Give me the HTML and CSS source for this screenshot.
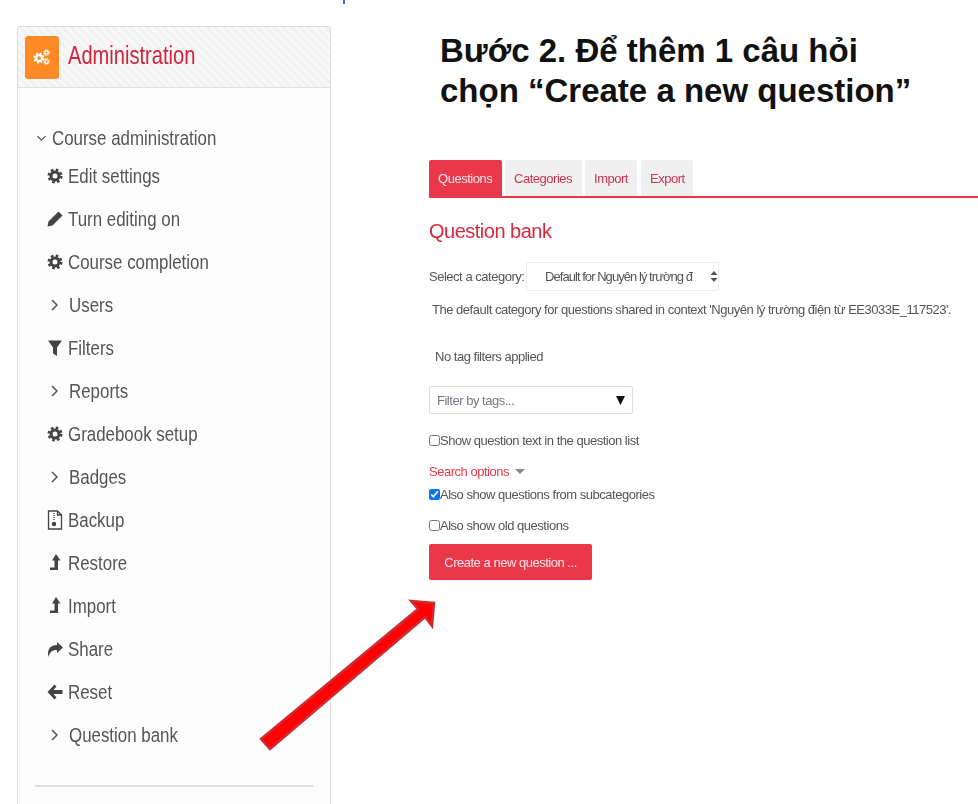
FILE: index.html
```html
<!DOCTYPE html>
<html lang="vi">
<head>
  <meta charset="UTF-8" />
  <meta name="viewport" content="width=device-width, initial-scale=1.0" />
  <title>Question bank</title>
  <link rel="stylesheet" href="styles.css">
</head>
<body>
  <svg class="defs" width="0" height="0">
    <symbol id="gear" viewBox="0 0 16 16">
      <circle cx="8" cy="8" r="6.3" fill="none" stroke="currentColor" stroke-width="2.4" stroke-dasharray="2.6 2.35" />
      <circle cx="8" cy="8" r="4" fill="none" stroke="currentColor" stroke-width="3" />
    </symbol>
    <symbol id="chevron" viewBox="0 0 16 16">
      <path d="M5 3l5 5-5 5" fill="none" stroke="currentColor" stroke-width="1.5" />
    </symbol>
    <symbol id="upload" viewBox="0 0 16 18">
      <path d="M9 0l4.500 6.500H11V16H3v-2.500h4.500v-7H5z" fill="currentColor" />
    </symbol>
  </svg>

  <div class="tick"></div>

  <div class="page">
    <aside class="sidebar">
      <div class="sidebar-head">
        <span class="head-icon">
          <svg width="18" height="18" viewBox="0 0 18 18">
            <use href="#gear" x="0" y="4" width="12" height="12" />
            <use href="#gear" x="10" y="1" width="7" height="7" />
            <use href="#gear" x="10" y="10" width="7" height="7" />
          </svg>
        </span>
        <h2>Administration</h2>
      </div>
      <div class="sidebar-body">
        <div class="course-title">
          <svg class="chev-down" width="13" height="13"><use href="#chevron" /></svg>
          <span class="lbl">Course administration</span>
        </div>
        <ul class="menu">
          <li><svg class="ico" width="16" height="16"><use href="#gear" /></svg><span class="lbl">Edit settings</span></li>
          <li>
            <svg class="ico" width="16" height="16" viewBox="0 0 16 16"><path d="M11.500 .500l4 4L5.500 14.500.500 15.500l1-5z" fill="currentColor" /></svg>
            <span class="lbl">Turn editing on</span>
          </li>
          <li><svg class="ico" width="16" height="16"><use href="#gear" /></svg><span class="lbl">Course completion</span></li>
          <li class="branch"><svg class="chev" width="16" height="16"><use href="#chevron" /></svg><span class="lbl">Users</span></li>
          <li>
            <svg class="ico" width="16" height="18" viewBox="0 0 16 18"><path d="M1 1.500h14L10 8.500v8.500L6 14.500V8.500z" fill="currentColor" /></svg>
            <span class="lbl">Filters</span>
          </li>
          <li class="branch"><svg class="chev" width="16" height="16"><use href="#chevron" /></svg><span class="lbl">Reports</span></li>
          <li><svg class="ico" width="16" height="16"><use href="#gear" /></svg><span class="lbl">Gradebook setup</span></li>
          <li class="branch"><svg class="chev" width="16" height="16"><use href="#chevron" /></svg><span class="lbl">Badges</span></li>
          <li>
            <svg class="ico" width="16" height="20" viewBox="0 0 16 20">
              <path d="M1.500 1h9l4 4v14h-13zM10.500 1v4h4" fill="none" stroke="currentColor" stroke-width="1.300" />
              <path d="M7 3v8" stroke="currentColor" stroke-width="1.500" stroke-dasharray="1 1" />
              <circle cx="7" cy="14" r="2.200" fill="currentColor" />
            </svg>
            <span class="lbl">Backup</span>
          </li>
          <li><svg class="ico" width="16" height="18"><use href="#upload" /></svg><span class="lbl">Restore</span></li>
          <li><svg class="ico" width="16" height="18"><use href="#upload" /></svg><span class="lbl">Import</span></li>
          <li>
            <svg class="ico" width="16" height="16" viewBox="0 0 16 16"><path d="M10 1l6 5.500-6 5.500V9C6 9 3 10 1.500 16 -.500 8 4 4 10 4z" fill="currentColor" /></svg>
            <span class="lbl">Share</span>
          </li>
          <li>
            <svg class="ico" width="16" height="16" viewBox="0 0 16 16"><path d="M7.500 .500l2 2L6.500 6h9v4h-9l3 3.500-2 2L.500 8z" fill="currentColor" /></svg>
            <span class="lbl">Reset</span>
          </li>
          <li class="branch"><svg class="chev" width="16" height="16"><use href="#chevron" /></svg><span class="lbl">Question bank</span></li>
        </ul>
        <hr class="sep" />
      </div>
    </aside>

    <main class="content">
      <h1>Bước 2. Để thêm 1 câu hỏi<br>chọn “Create a new question”</h1>

      <div class="shot">
        <div class="tabs">
          <a class="tab active">Questions</a>
          <a class="tab tab-cat">Categories</a>
          <a class="tab tab-imp">Import</a>
          <a class="tab tab-exp">Export</a>
        </div>
        <h3>Question bank</h3>
        <div class="cat-row">
          <span class="cat-label">Select a category:</span>
          <div class="select">
            <span class="select-text">Default for Nguyên lý trường đ</span>
            <svg width="8" height="11" viewBox="0 0 8 11"><path d="M4 0l3.500 4h-7zM4 11L.500 7h7z" fill="#555" /></svg>
          </div>
        </div>
        <p class="cat-info">The default category for questions shared in context 'Nguyên lý trường điện từ EE3033E_117523'.</p>
        <p class="no-tags">No tag filters applied</p>
        <div class="tag-input">
          <span>Filter by tags...</span>
          <svg width="9" height="9" viewBox="0 0 9 9"><path d="M0 0h9L4.500 9z" fill="#111" /></svg>
        </div>
        <label class="check check-text"><input type="checkbox" />Show question text in the question list</label>
        <div class="search-opts">Search options <i class="caret"></i></div>
        <label class="check check-sub"><input type="checkbox" checked />Also show questions from subcategories</label>
        <label class="check check-old"><input type="checkbox" />Also show old questions</label>
        <button class="create-btn">Create a new question ...</button>
      </div>
    </main>
  </div>

  <!-- arrow drawn over sidebar and content -->
  <svg class="arrow" width="978" height="804" viewBox="0 0 978 804">
    <polygon points="261,739 418,609 411,601 434,603 432,626 425,617 270,749" fill="#ff0000" stroke="#cf2b33" stroke-width="2.500" />
  </svg>
</body>
</html>
```

FILE: styles.css
```css
* {
  box-sizing: border-box;
}
html, body {
  height: 804px;
  overflow: hidden;
}
body {
  margin: 0;
  position: relative;
  background: white;
  font-family: "Liberation Sans", Arial, sans-serif;
  color: #555;
}
.defs {
  position: absolute;
}
.tick {
  position: absolute;
  top: 0;
  left: 343px;
  width: 2px;
  height: 4px;
  background: #2b74c8;
}
.arrow {
  position: absolute;
  top: 0;
  left: 0;
}
.page {
  display: flex;
  height: 804px;
}

/* left block */
.sidebar {
  width: 314px;
  margin: 26px 0 0 17px;
  flex-shrink: 0;
  background: #fdfdfd;
  border: 1px solid #ddd;
  border-bottom: none;
  border-radius: 3px 3px 0 0;
}
.sidebar-head {
  height: 61px;
  padding-left: 7px;
  display: flex;
  align-items: center;
  gap: 9px;
  border-bottom: 1px solid #e0e0e0;
  background: repeating-linear-gradient(45deg, #f2f2f2 0 3px, #f8f8f8 3px 6px);
}
.head-icon {
  width: 34px;
  height: 43px;
  border-radius: 3px;
  background: #fd8a24;
  color: white;
  display: flex;
  align-items: center;
  justify-content: center;
}
.sidebar-head h2 {
  margin: 0 0 3px;
  font-size: 25px;
  font-weight: normal;
  color: #d0263c;
  transform: scaleX(.804);
  transform-origin: left;
}
.sidebar-body {
  padding: 38px 17px 0;
  filter: blur(.4px);
}
.course-title {
  display: flex;
  align-items: center;
  gap: 4px;
  height: 24px;
  font-size: 20.5px;
}
.lbl {
  transform: scaleX(.824);
  transform-origin: left;
  white-space: nowrap;
}
.chev-down {
  transform: rotate(90deg);
}
.menu {
  list-style: none;
  margin: 4px 0 0;
  padding: 0 0 0 12px;
}
.menu li {
  height: 43px;
  display: flex;
  align-items: center;
  gap: 5px;
  font-size: 20.5px;
  color: #555;
}
.menu .ico {
  color: #444;
  flex-shrink: 0;
}
.menu .chev {
  color: #555;
  margin-right: 1px;
  flex-shrink: 0;
}
.sep {
  margin: 29px 0 0;
  border: none;
  border-top: 2px solid #ddd;
  height: 0;
}

/* right block */
.content {
  flex: 1;
  min-width: 0;
  padding: 0 0 0 98px;
}
.content h1 {
  margin: 31px 0 0 11px;
  font-size: 33px;
  line-height: 40px;
  color: #111;
  white-space: nowrap;
}
.shot {
  margin-top: 49px;
  filter: blur(.6px);
  font-size: 13px;
  letter-spacing: -.48px;
}
.tabs {
  display: flex;
  gap: 3px;
  height: 38px;
  border-bottom: 2px solid #e8384a;
}
.tab {
  height: 36px;
  padding: 0 9px;
  display: flex;
  align-items: center;
  background: #f0f0f0;
  color: #c9374f;
  border-radius: 2px 2px 0 0;
}
.tab.active {
  width: 73px;
  background: #e8384a;
  color: #ffe4e6;
}
.tab-cat {
  width: 77px;
}
.tab-imp {
  width: 52px;
  margin-right: 1px;
}
.tab-exp {
  width: 52px;
}
.shot h3 {
  margin: 20px 0 0;
  font-size: 20px;
  line-height: 26px;
  font-weight: normal;
  color: #d9273d;
  letter-spacing: -.5px;
}
.cat-row {
  margin-top: 18px;
  display: flex;
  align-items: center;
}
.cat-label {
  width: 97px;
  flex-shrink: 0;
}
.select {
  width: 193px;
  height: 29px;
  padding: 0 2px 0 18px;
  display: flex;
  align-items: center;
  gap: 18px;
  border: 1px solid #eee;
  border-radius: 2px;
  white-space: nowrap;
}
.select-text {
  letter-spacing: -.95px;
}
.select svg {
  flex-shrink: 0;
}
.cat-info {
  margin: 11px 0 0 3px;
  line-height: 16px;
  white-space: nowrap;
}
.no-tags {
  margin: 31px 0 0 6px;
  line-height: 16px;
}
.tag-input {
  width: 204px;
  height: 28px;
  margin-top: 21px;
  padding: 0 7px;
  display: flex;
  align-items: center;
  justify-content: space-between;
  border: 1px solid #ddd;
  border-radius: 2px;
  color: #778;
}
.check {
  display: flex;
  align-items: center;
  height: 16px;
}
.check input {
  width: 11px;
  height: 11px;
  margin: 0;
}
.check-text {
  margin-top: 18px;
}
.search-opts {
  margin-top: 16px;
  height: 16px;
  color: #e8384a;
}
.caret {
  display: inline-block;
  margin-left: 3px;
  vertical-align: 2px;
  border: 5px solid transparent;
  border-top: 5px solid #888;
  border-bottom: none;
}
.check-sub {
  margin-top: 6px;
}
.check-old {
  margin-top: 15px;
}
.create-btn {
  display: block;
  width: 163px;
  height: 36px;
  margin-top: 11px;
  border: none;
  border-radius: 2px;
  background: #e8384a;
  color: #ffe4e6;
  font: inherit;
  letter-spacing: inherit;
}
```
